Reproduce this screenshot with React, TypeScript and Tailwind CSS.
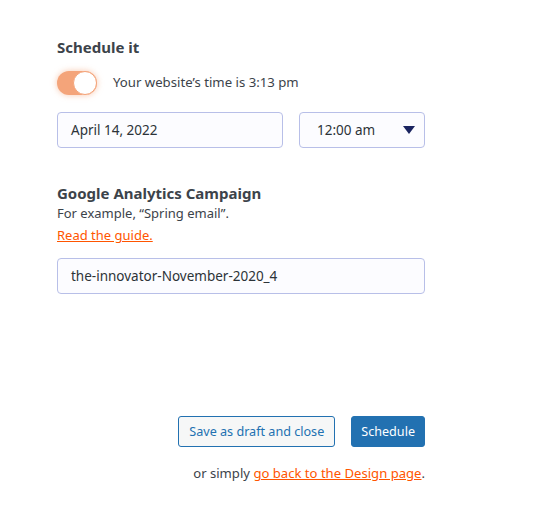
import React from "react";

export default function App() {
  return (
    <div className="w-[557px] h-[523px] bg-white text-[#3c434a]" style={{ fontFamily: '"Noto Sans", "Open Sans", sans-serif' }}>
      <div className="pt-[36px] pl-[57px] w-[425px]">
        <h2 className="text-[15px] font-bold leading-[22px] text-[#3c434a]">Schedule it</h2>
        <div className="mt-[13px] flex items-center h-[24px]">
          <div className="relative w-[40px] h-[24px] rounded-full bg-[#f4a47a] shadow-[0_0_6px_rgba(244,164,122,0.6)]">
            <div className="absolute right-0 top-0 w-[24px] h-[24px] rounded-full bg-white border-[1.5px] border-[#f4a47a]"></div>
          </div>
          <span className="ml-[16px] text-[13.2px] text-[#3c434a]">Your website’s time is 3:13 pm</span>
        </div>
        <div className="mt-[17px] flex gap-[16px]">
          <div className="w-[226px] h-[36px] rounded-[4px] border border-[#b8bfe8] bg-[#fcfcff] flex items-center px-[13px] text-[13.5px] text-[#2c3338]">April 14, 2022</div>
          <div className="w-[126px] h-[36px] rounded-[4px] border border-[#b8bfe8] bg-[#fcfcff] flex items-center justify-between pl-[17px] pr-[9px] text-[13.5px] text-[#2c3338]">
            <span>12:00 am</span>
            <svg width="12" height="9" viewBox="0 0 12 9"><path d="M0 0 H12 L6 8 Z" fill="#1a2460" /></svg>
          </div>
        </div>
        <h2 className="mt-[34px] text-[15px] font-bold leading-[22px] text-[#3c434a]">Google Analytics Campaign</h2>
        <p className="text-[13px] leading-[18px] text-[#3c434a]">For example, “Spring email”.</p>
        <a href="#" className="block mt-[4px] text-[13px] leading-[18px] text-[#ff5500] underline">Read the guide.</a>
        <div className="mt-[14px] h-[36px] rounded-[4px] border border-[#b8bfe8] bg-[#fcfcff] flex items-center px-[13px] text-[13.5px] text-[#2c3338]">the-innovator-November-2020_4</div>
        <div className="mt-[122px] flex justify-end gap-[16px]">
          <button className="h-[31px] pt-[2px] px-[10px] rounded-[3px] border border-[#2271b1] bg-[#f6f7f7] text-[12.6px] text-[#2271b1]">Save as draft and close</button>
          <button className="h-[31px] pt-[2px] px-[9px] rounded-[3px] border border-[#2271b1] bg-[#2271b1] text-[12.6px] text-white">Schedule</button>
        </div>
        <p className="mt-[17px] text-right text-[13.1px] text-[#3c434a]">or simply <a href="#" className="text-[#ff5500] underline">go back to the Design page</a>.</p>
      </div>
    </div>
  );
}
